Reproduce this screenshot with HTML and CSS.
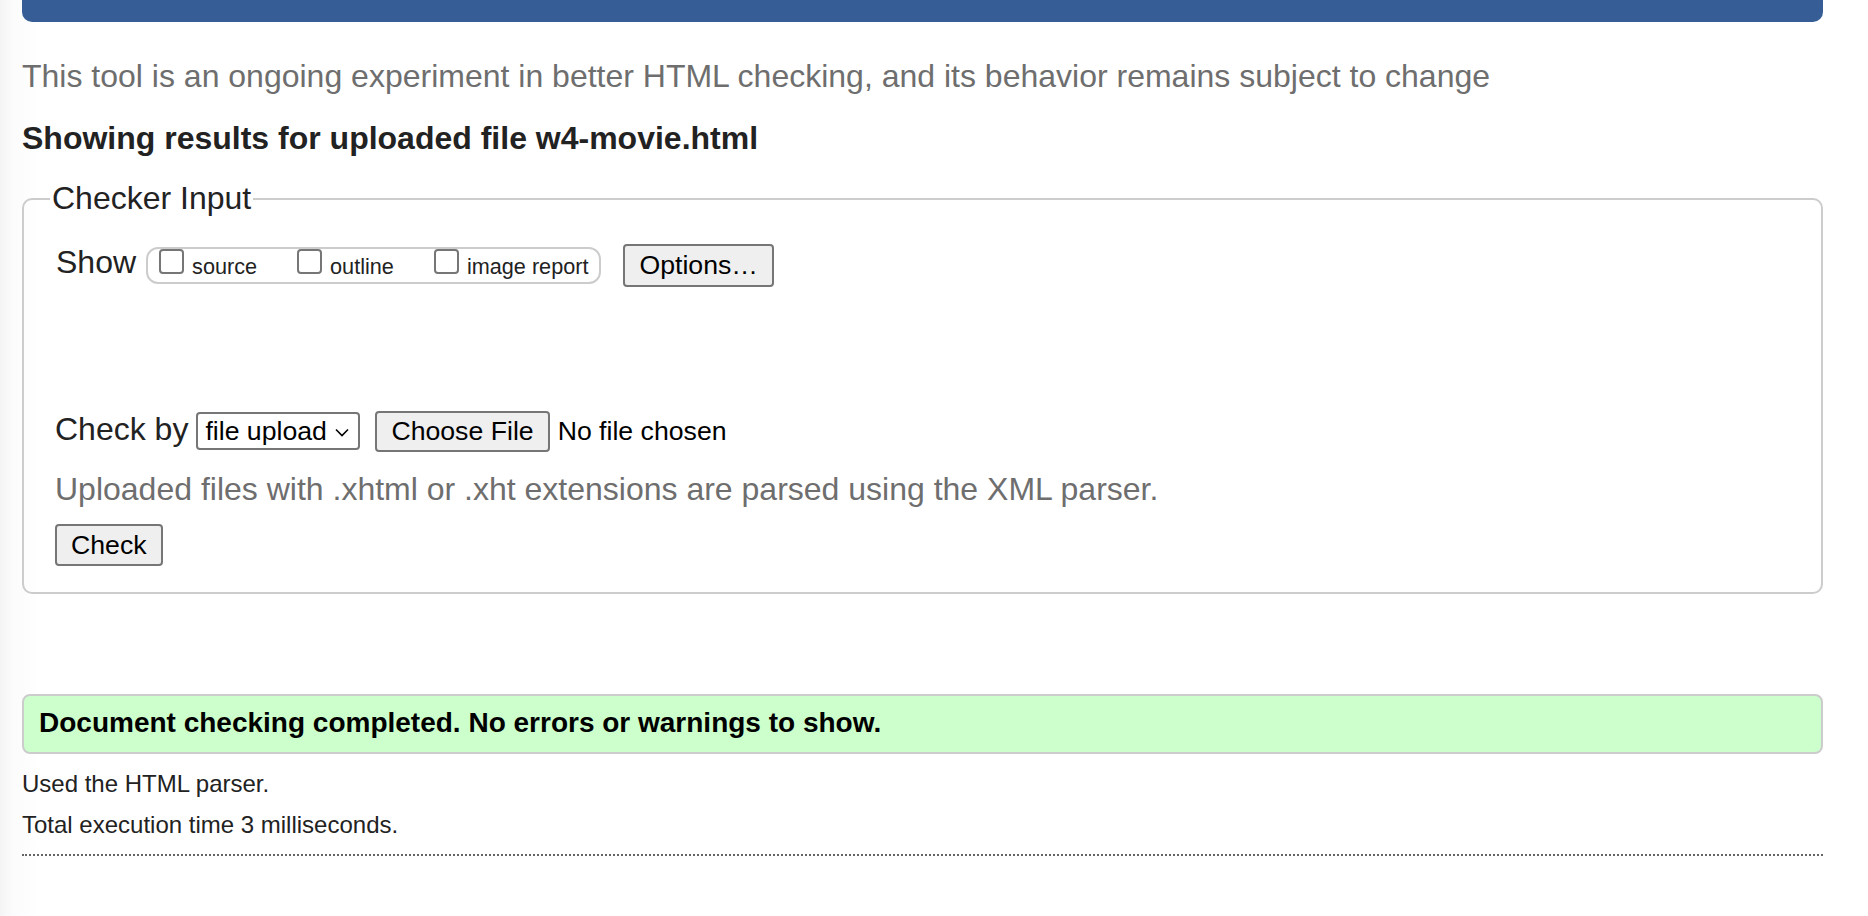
FILE: index.html
```html
<!DOCTYPE html>
<html lang="en">
<head>
<meta charset="utf-8">
<title>Nu Html Checker</title>
<link rel="stylesheet" href="styles.css">
</head>
<body>
<div class="topbar"></div>
<p class="intro">This tool is an ongoing experiment in better HTML checking, and its behavior remains subject to change</p>
<h2 class="results-title">Showing results for uploaded file w4-movie.html</h2>
<form class="checker">
  <fieldset class="checker-input">
    <legend>Checker Input</legend>
    <div class="row row-show">
      <span class="label">Show</span>
      <span class="show-group">
        <label class="opt"><input type="checkbox" class="cb"><span class="opt-text">source</span></label>
        <label class="opt"><input type="checkbox" class="cb"><span class="opt-text">outline</span></label>
        <label class="opt last"><input type="checkbox" class="cb"><span class="opt-text">image report</span></label>
      </span>
      <button type="button" class="btn btn-options">Options…</button>
    </div>
    <div class="row row-check">
      <span class="label">Check by</span>
      <span class="select-wrap">
        <select class="select"><option>file upload</option></select>
        <svg class="chevron" width="14" height="9" viewBox="0 0 14 9"><path d="M1 1.5 L7 7.5 L13 1.5" fill="none" stroke="#000" stroke-width="1.6"/></svg>
      </span>
      <button type="button" class="btn btn-file">Choose File</button>
      <span class="file-status">No file chosen</span>
    </div>
    <p class="hint">Uploaded files with .xhtml or .xht extensions are parsed using the XML parser.</p>
    <button type="button" class="btn btn-check">Check</button>
  </fieldset>
</form>
<div class="success">Document checking completed. No errors or warnings to show.</div>
<p class="details">Used the HTML parser.</p>
<p class="details second">Total execution time 3 milliseconds.</p>
<hr class="dotted">
</body>
</html>
```
FILE: styles.css
```css
html {
  background: linear-gradient(to right, #f4f4f4 0, #fbfbfb 12px, #ffffff 40px);
}
body {
  margin: 0;
  padding: 0 45px 0 22px;
  font-family: "Liberation Sans", Arial, sans-serif;
  color: #222;
}
.topbar {
  height: 22px;
  background: #365d95;
  border-radius: 0 0 10px 10px;
}
.intro {
  margin: 36px 0 0;
  font-size: 32px;
  line-height: 37px;
  color: #6e6e6e;
}
.results-title {
  margin: 25px 0 0;
  font-size: 32px;
  line-height: 37px;
  font-weight: bold;
  color: #222;
}
.checker { margin: 0; }
.checker-input {
  margin: 23px 0 0;
  padding: 27px 30px 26px 31px;
  border: 2px solid #cccccc;
  border-radius: 10px;
  min-width: 0;
}
.checker-input legend {
  margin-left: -5px;
  padding: 0 2px;
  font-size: 32px;
  line-height: 37px;
  color: #222;
}
.row {
  display: flex;
  align-items: flex-start;
}
.label {
  font-size: 32px;
  line-height: 37px;
  color: #222;
}
.row-show .label { margin: 0 10px 0 1px; }
.show-group {
  display: flex;
  align-items: flex-start;
  box-sizing: border-box;
  height: 37px;
  margin-top: 3px;
  padding: 0 11px;
  border: 2px solid #cccccc;
  border-radius: 12px;
}
.opt {
  display: flex;
  align-items: flex-start;
  margin-right: 40px;
}
.opt.last { margin-right: 0; }
.cb {
  appearance: none;
  -webkit-appearance: none;
  box-sizing: border-box;
  width: 25px;
  height: 25px;
  margin: 0;
  border: 2px solid #767676;
  border-radius: 4px;
  background: #fff;
}
.opt-text {
  margin: 5px 0 0 8px;
  font-size: 21.67px;
  line-height: 25px;
  color: #222;
}
.btn {
  box-sizing: border-box;
  margin: 0;
  padding: 0 13px;
  border: 2px solid #767676;
  border-radius: 4px;
  background: #efefef;
  color: #000;
  font-family: "Liberation Sans", Arial, sans-serif;
  font-size: 26.67px;
}
.btn-options {
  height: 43px;
  margin-left: 22px;
  padding: 0 14px;
}
.row-check { margin-top: 124px; }
.row-check .label { margin-right: 8px; }
.select-wrap {
  position: relative;
  display: block;
  margin-top: 1px;
}
.select {
  appearance: none;
  -webkit-appearance: none;
  box-sizing: border-box;
  display: block;
  width: 164px;
  height: 38px;
  margin: 0;
  padding: 0 0 0 7px;
  border: 2px solid #767676;
  border-radius: 4px;
  background: #fff;
  color: #000;
  font-family: "Liberation Sans", Arial, sans-serif;
  font-size: 26.67px;
}
.chevron {
  position: absolute;
  right: 11px;
  top: 16px;
  pointer-events: none;
}
.btn-file {
  height: 41px;
  margin-left: 15px;
  padding: 0 14px;
}
.file-status {
  margin-left: 8px;
  font-size: 26.67px;
  line-height: 41px;
  color: #000;
}
.hint {
  margin: 19px 0 0;
  font-size: 32px;
  line-height: 37px;
  color: #6e6e6e;
}
.btn-check {
  display: block;
  height: 42px;
  margin-top: 16px;
  padding: 0 14px;
}
.success {
  margin-top: 100px;
  padding: 11px 15px 13px;
  border: 2px solid #cccccc;
  border-radius: 8px;
  background: #ccffcc;
  color: #000;
  font-size: 28px;
  line-height: 32px;
  font-weight: bold;
}
.details {
  margin: 16px 0 0;
  font-size: 24px;
  line-height: 28px;
  color: #222;
}
.details.second { margin-top: 13px; }
.dotted {
  margin: 15px 0 0;
  height: 0;
  border: 0;
  border-top: 2px dotted #666;
}
```
